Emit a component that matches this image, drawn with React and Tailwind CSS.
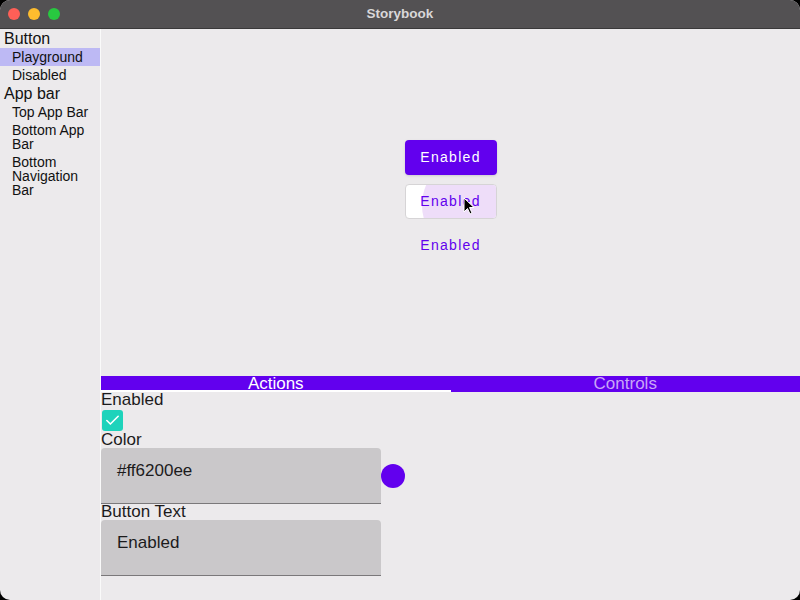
import { Check } from "lucide-react";

const sidebar = [
  { header: "Button", items: ["Playground", "Disabled"] },
  { header: "App bar", items: ["Top App Bar", "Bottom App Bar", "Bottom Navigation Bar"] },
];

export default function App() {
  return (
    <div className="w-[800px] h-[600px] bg-black font-['Liberation_Sans',Arial,sans-serif]">
      <div className="w-full h-full rounded-[10px] overflow-hidden flex flex-col bg-[#ECEAEC]">
        {/* title bar */}
        <div className="h-[29px] shrink-0 bg-[#535153] border-b border-[#3a393a] flex items-center relative">
          <div className="flex gap-[8px] pl-[8px]">
            <span className="w-[12px] h-[12px] rounded-full bg-[#FE5F57]" />
            <span className="w-[12px] h-[12px] rounded-full bg-[#FDBC2E]" />
            <span className="w-[12px] h-[12px] rounded-full bg-[#28C840]" />
          </div>
          <div className="absolute inset-0 flex items-center justify-center text-[13.5px] font-bold text-[#D9D7D9]">
            Storybook
          </div>
        </div>

        <div className="flex flex-1 min-h-0">
          {/* sidebar */}
          <div className="w-[101px] shrink-0 border-r border-[#FAFAFA] text-[#111]">
            {sidebar.map((group) => (
              <div key={group.header}>
                <div className="pl-[4px] text-[16px] leading-[19px]">{group.header}</div>
                {group.items.map((item) => (
                  <div
                    key={item}
                    className={
                      "pl-[12px] pr-[6px] py-[2px] text-[14px] leading-[14px] " +
                      (item === "Playground" ? "bg-[#BDB9F4]" : "")
                    }
                  >
                    {item}
                  </div>
                ))}
              </div>
            ))}
          </div>

          {/* main */}
          <div className="flex-1 flex flex-col min-w-0">
            <div className="h-[347px] shrink-0 flex flex-col items-center justify-center gap-[9px] pb-[2px] text-[14px] tracking-[1.3px]">
              <button className="w-[92px] h-[35px] rounded-[4px] bg-[#6200EE] text-white shadow-sm">
                Enabled
              </button>
              <button className="relative w-[92px] h-[35px] rounded-[4px] bg-white border border-[#D6D4D6] text-[#6200EE] overflow-hidden">
                <span className="absolute left-[16px] top-[-30px] w-[100px] h-[100px] rounded-full bg-[#EEDDF9]" />
                <span className="relative">Enabled</span>
                <svg className="absolute left-[57px] top-[12px]" width="12" height="18" viewBox="0 0 12 18">
                  <path d="M1 1 L1 15 L4.5 11.5 L7 17 L9 16 L6.5 10.5 L11 10.5 Z" fill="#000" stroke="#fff" strokeWidth="1" />
                </svg>
              </button>
              <button className="w-[92px] h-[35px] text-[#6200EE]">Enabled</button>
            </div>

            {/* tabs */}
            <div className="h-[16px] shrink-0 flex bg-[#6200EE] text-[17px] leading-[15px]">
              <div className="flex-1 text-center text-white border-b-2 border-white">Actions</div>
              <div className="flex-1 text-center text-[#C9A6F7]">Controls</div>
            </div>

            {/* controls */}
            <div className="flex flex-col text-[17px] text-[#1C1B1C]">
              <div className="leading-[15px]">Enabled</div>
              <div className="w-[21px] h-[21px] ml-[1px] mt-[3px] rounded-[3px] bg-[#1ED3BB] flex items-center justify-center">
                <Check size={17} color="#fff" strokeWidth={2.25} />
              </div>
              <div className="leading-[16px] mt-[1px]">Color</div>
              <div className="flex items-center">
                <div className="w-[280px] h-[56px] bg-[#CAC8CA] rounded-t-[4px] border-b border-[#7A787A] px-[16px] pt-[13px] leading-[20px]">
                  #ff6200ee
                </div>
                <span className="w-[24px] h-[24px] rounded-full bg-[#6200EE]" />
              </div>
              <div className="leading-[16px]">Button Text</div>
              <div className="w-[280px] h-[56px] bg-[#CAC8CA] rounded-t-[4px] border-b border-[#7A787A] px-[16px] pt-[13px] leading-[20px]">
                Enabled
              </div>
            </div>
          </div>
        </div>
      </div>
    </div>
  );
}
